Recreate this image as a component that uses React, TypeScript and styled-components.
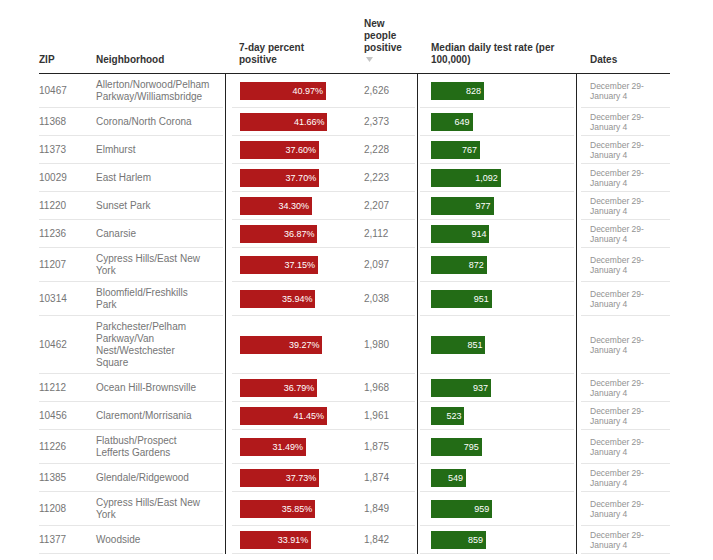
import React from "react";
import styled, { createGlobalStyle } from "styled-components";

type Row = {
  zip: string;
  name: string;
  pct: number;
  people: string;
  rate: number;
};

const rows: Row[] = [
  { zip: "10467", name: "Allerton/Norwood/Pelham\nParkway/Williamsbridge", pct: 40.97, people: "2,626", rate: 828 },
  { zip: "11368", name: "Corona/North Corona", pct: 41.66, people: "2,373", rate: 649 },
  { zip: "11373", name: "Elmhurst", pct: 37.6, people: "2,228", rate: 767 },
  { zip: "10029", name: "East Harlem", pct: 37.7, people: "2,223", rate: 1092 },
  { zip: "11220", name: "Sunset Park", pct: 34.3, people: "2,207", rate: 977 },
  { zip: "11236", name: "Canarsie", pct: 36.87, people: "2,112", rate: 914 },
  { zip: "11207", name: "Cypress Hills/East New\nYork", pct: 37.15, people: "2,097", rate: 872 },
  { zip: "10314", name: "Bloomfield/Freshkills\nPark", pct: 35.94, people: "2,038", rate: 951 },
  { zip: "10462", name: "Parkchester/Pelham\nParkway/Van\nNest/Westchester\nSquare", pct: 39.27, people: "1,980", rate: 851 },
  { zip: "11212", name: "Ocean Hill-Brownsville", pct: 36.79, people: "1,968", rate: 937 },
  { zip: "10456", name: "Claremont/Morrisania", pct: 41.45, people: "1,961", rate: 523 },
  { zip: "11226", name: "Flatbush/Prospect\nLefferts Gardens", pct: 31.49, people: "1,875", rate: 795 },
  { zip: "11385", name: "Glendale/Ridgewood", pct: 37.73, people: "1,874", rate: 549 },
  { zip: "11208", name: "Cypress Hills/East New\nYork", pct: 35.85, people: "1,849", rate: 959 },
  { zip: "11377", name: "Woodside", pct: 33.91, people: "1,842", rate: 859 },
];

const columns = "57px 129px 139px 53px 159px 94px";

const GlobalStyle = createGlobalStyle`
  body {
    margin: 0;
    background: #fff;
  }
`;

const Table = styled.div`
  padding-left: 39px;
  width: 631px;
  font-family: "Liberation Sans", Arial, sans-serif;
`;

const HeaderRow = styled.div`
  display: grid;
  grid-template-columns: ${columns};
  align-items: end;
  height: 74px;
  box-sizing: border-box;
  border-bottom: 1px solid #222;
`;

const HeadCell = styled.div<{ $pad?: number; $bottom?: number }>`
  padding: 0 0 ${(p) => p.$bottom ?? 7}px ${(p) => p.$pad ?? 0}px;
  font-size: 10px;
  font-weight: bold;
  line-height: 12px;
  color: #333;
`;

const SortMark = styled.svg`
  display: block;
  margin: 3px 0 0 2px;
`;

const BodyRow = styled.div`
  display: grid;
  grid-template-columns: ${columns};
`;

const Cell = styled.div<{ $rule?: boolean; $pad?: number; $py?: number; $inL?: number; $inR?: number }>`
  position: relative;
  display: flex;
  align-items: center;
  padding: ${(p) => p.$py ?? 5}px 0 ${(p) => p.$py ?? 5}px ${(p) => p.$pad ?? 0}px;
  border-left: ${(p) => (p.$rule ? "1px solid #222" : "none")};
  font-size: 10px;
  line-height: 12px;
  color: #757575;
  white-space: pre-line;

  &::after {
    content: "";
    position: absolute;
    left: ${(p) => p.$inL ?? 0}px;
    right: ${(p) => p.$inR ?? 0}px;
    bottom: 0;
    height: 1px;
    background: #e6e6e6;
  }
`;

const Dates = styled.span`
  font-size: 8.5px;
  line-height: 10px;
  color: #929292;
`;

const Bar = styled.div<{ $color: string }>`
  box-sizing: border-box;
  height: 18px;
  line-height: 18px;
  padding-right: 3px;
  background: ${(p) => p.$color};
  color: #fff;
  font-size: 9px;
  text-align: right;
  white-space: nowrap;
`;

const App = () => {
  return (
    <>
      <GlobalStyle />
      <Table>
        <HeaderRow>
          <HeadCell>ZIP</HeadCell>
          <HeadCell>Neighborhood</HeadCell>
          <HeadCell $pad={14}>
            7-day percent
            <br />
            positive
          </HeadCell>
          <HeadCell $bottom={11}>
            New
            <br />
            people
            <br />
            positive
            <SortMark width="7" height="5" viewBox="0 0 7 5">
              <path d="M0 0 L7 0 L3.5 5 Z" fill="#c4c4c4" />
            </SortMark>
          </HeadCell>
          <HeadCell $pad={14}>
            Median daily test rate (per
            <br />
            100,000)
          </HeadCell>
          <HeadCell $pad={14}>Dates</HeadCell>
        </HeaderRow>
        {rows.map((r) => (
          <BodyRow key={r.zip + r.people}>
            <Cell>{r.zip}</Cell>
            <Cell $inR={2}>{r.name}</Cell>
            <Cell $rule $pad={14} $inL={6}>
              <Bar $color="#b1191b" style={{ width: r.pct * 2.1 }}>
                {r.pct.toFixed(2)}%
              </Bar>
            </Cell>
            <Cell $inR={2}>{r.people}</Cell>
            <Cell $rule $pad={13} $inL={2} $inR={2}>
              <Bar $color="#236c16" style={{ width: r.rate * 0.064 }}>
                {r.rate.toLocaleString("en-US")}
              </Bar>
            </Cell>
            <Cell $rule $pad={13} $py={4} $inL={4}>
              <Dates>{"December 29-\nJanuary 4"}</Dates>
            </Cell>
          </BodyRow>
        ))}
      </Table>
    </>
  );
};

export default App;
